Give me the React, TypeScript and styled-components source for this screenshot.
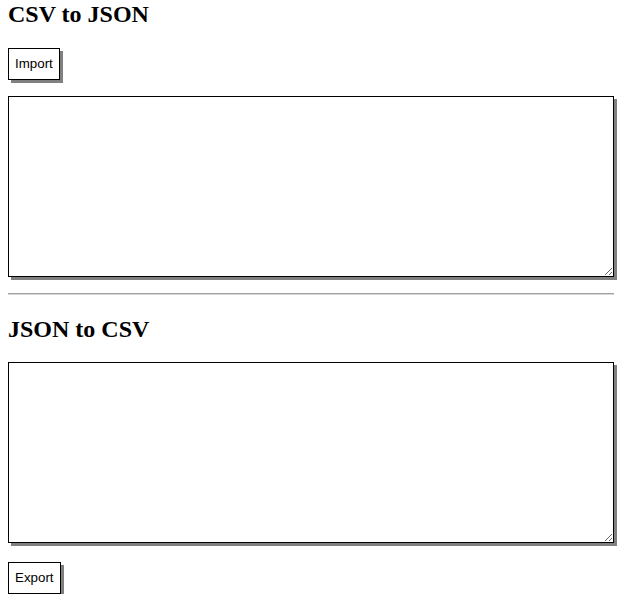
import React from "react";
import styled, { createGlobalStyle } from "styled-components";

const Global = createGlobalStyle`
  html, body { margin: 0; padding: 0; background: #fff; }
  body { font-family: "Liberation Serif", "Times New Roman", serif; color: #000; overflow: hidden; }
`;

const Page = styled.div`
  width: 606px;
  margin-left: 8px;
  display: flex;
  flex-direction: column;
  align-items: flex-start;
`;

const Heading = styled.h2<{ $top?: number }>`
  font-family: "Liberation Serif", "Times New Roman", serif;
  font-size: 24px;
  font-weight: bold;
  line-height: 28px;
  margin: ${(p) => p.$top ?? 0}px 0 ${(p) => (p.$top ? 19 : 20)}px 0;
`;

const Button = styled.button<{ $top?: number }>`
  font-family: "Liberation Sans", Arial, sans-serif;
  font-size: 13.333px;
  line-height: 16px;
  padding: 7px 6px;
  margin: ${(p) => p.$top ?? 0}px 0 0 0;
  background: #fff;
  color: #000;
  border: 1px solid #000;
  border-radius: 0;
  box-shadow: 3px 3px 0 #808080;
  cursor: pointer;
`;

const Area = styled.textarea<{ $top?: number }>`
  display: block;
  box-sizing: border-box;
  width: 606px;
  height: 181px;
  margin: ${(p) => p.$top ?? 0}px 0 0 0;
  border: 1px solid #000;
  border-radius: 0;
  box-shadow: 3px 3px 0 #808080;
  padding: 2px;
  font-family: "Liberation Mono", monospace;
  font-size: 13px;
  background: #fff;
`;

const Rule = styled.hr`
  width: 606px;
  box-sizing: border-box;
  margin: 16px 0 0 0;
  border: 0;
  border-top: 1px solid #a0a0a0;
  border-bottom: 1px solid #d8d8d8;
  height: 0;
`;

export default function App() {
  return (
    <>
      <Global />
      <Page>
        <Heading>CSV to JSON</Heading>
        <Button>Import</Button>
        <Area $top={16} />
        <Rule />
        <Heading $top={20}>JSON to CSV</Heading>
        <Area />
        <Button $top={19}>Export</Button>
      </Page>
    </>
  );
}
